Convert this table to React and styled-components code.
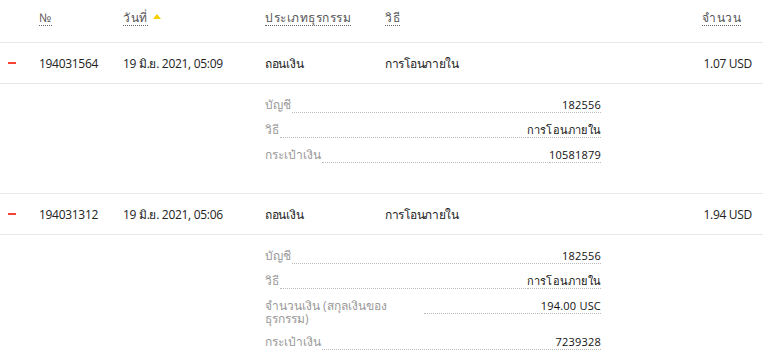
import React from 'react';
import styled, { createGlobalStyle } from 'styled-components';

const GlobalStyle = createGlobalStyle`
    body {
        margin: 0;
        background: #fff;
        font-family: "Open Sans", "Noto Sans", "DejaVu Sans", sans-serif;
        font-size: 12px;
        color: #222;
    }
`;

const transactions = [
    {
        id: '194031564',
        date: '19 มิ.ย. 2021, 05:09',
        type: 'ถอนเงิน',
        method: 'การโอนภายใน',
        amount: '1.07 USD',
        details: [
            { label: 'บัญชี', value: '182556' },
            { label: 'วิธี', value: 'การโอนภายใน' },
            { label: 'กระเป๋าเงิน', value: '10581879' },
        ],
    },
    {
        id: '194031312',
        date: '19 มิ.ย. 2021, 05:06',
        type: 'ถอนเงิน',
        method: 'การโอนภายใน',
        amount: '1.94 USD',
        details: [
            { label: 'บัญชี', value: '182556' },
            { label: 'วิธี', value: 'การโอนภายใน' },
            { label: 'จำนวนเงิน (สกุลเงินของธุรกรรม)', value: '194.00 USC' },
            { label: 'กระเป๋าเงิน', value: '7239328' },
        ],
    },
];

function App() {
    return (
        <>
            <GlobalStyle />
            <Table>
                <HeadRow>
                    <span />
                    <HeadCell><Dotted>№</Dotted></HeadCell>
                    <HeadCell><Dotted>วันที่</Dotted><SortArrow /></HeadCell>
                    <HeadCell><Dotted>ประเภทธุรกรรม</Dotted></HeadCell>
                    <HeadCell><Dotted>วิธี</Dotted></HeadCell>
                    <HeadCell align="right"><Dotted>จำนวน</Dotted></HeadCell>
                </HeadRow>

                {transactions.map(t => (
                    <Block key={t.id}>
                        <Row>
                            <Cell><Minus /></Cell>
                            <Cell>{t.id}</Cell>
                            <Cell>{t.date}</Cell>
                            <Cell>{t.type}</Cell>
                            <Cell>{t.method}</Cell>
                            <Cell align="right">{t.amount}</Cell>
                        </Row>
                        <Details>
                            <DetailList>
                                {t.details.map(d => (
                                    <DetailRow key={d.label}>
                                        <DetailLabel>{d.label}</DetailLabel>
                                        <Filler />
                                        <DetailValue>{d.value}</DetailValue>
                                    </DetailRow>
                                ))}
                            </DetailList>
                        </Details>
                    </Block>
                ))}
            </Table>
        </>
    );
}

export default App;


const columns = '39px 84px 142px 120px 1fr auto';

const Table = styled.div`
    width: 100%;
`;

const HeadRow = styled.div`
    display: grid;
    grid-template-columns: ${columns};
    align-items: center;
    height: 42px;
    padding-right: 22px;
    border-bottom: 1px solid #e8e8e8;
`;

const HeadCell = styled.div`
    display: flex;
    align-items: center;
    justify-content: ${p => p.align === 'right' ? 'flex-end' : 'flex-start'};
    gap: 5px;
    color: #555;
    letter-spacing: 0.5px;
    padding-bottom: 6px;
`;

const Dotted = styled.span`
    border-bottom: 1px dotted #666;
    line-height: 14px;
`;

const SortArrow = styled.span`
    width: 0;
    height: 0;
    border-left: 4px solid transparent;
    border-right: 4px solid transparent;
    border-bottom: 5px solid #f5cf00;
    margin-bottom: 4px;
`;

const Block = styled.div`
    border-bottom: 1px solid #e8e8e8;
`;

const Row = styled.div`
    display: grid;
    grid-template-columns: ${columns};
    align-items: center;
    height: 40px;
    padding-right: 11px;
    border-bottom: 1px solid #e8e8e8;
`;

const Cell = styled.div`
    color: #222;
    letter-spacing: -0.3px;
    text-align: ${p => p.align || 'left'};
    white-space: nowrap;
`;

const Minus = styled.div`
    width: 8px;
    height: 2px;
    margin-left: 8px;
    background: #f44336;
`;

const Details = styled.div`
    display: grid;
    grid-template-columns: ${columns};
    padding: 8px 0 26px;
`;

const DetailList = styled.div`
    grid-column: 4 / 6;
    width: 336px;
    display: flex;
    flex-direction: column;
`;

const DetailRow = styled.div`
    display: flex;
    align-items: flex-start;
    padding: 6px 0 4px;
    line-height: 13px;
`;

const DetailLabel = styled.div`
    max-width: 158px;
    color: #999;
`;

const Filler = styled.div`
    flex: 1;
    height: 14px;
    margin: 0 1px;
    border-bottom: 1px dotted #bbb;
`;

const DetailValue = styled.div`
    font-size: 11px;
    letter-spacing: 0.2px;
    color: #111;
    white-space: nowrap;
    border-bottom: 1px dotted #bbb;
    height: 14px;
`;
